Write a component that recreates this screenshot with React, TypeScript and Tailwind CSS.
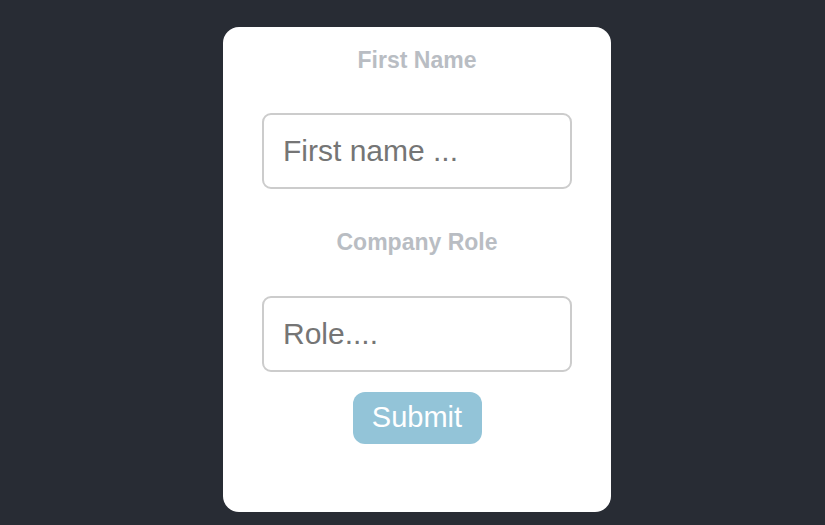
import { useState } from 'react'

export default function App() {
  const [name, setName] = useState('')
  const [role, setRole] = useState('')

  return (
    <div className="min-h-screen bg-[#282c34] flex justify-center pl-[9px] pt-[27px] font-['Liberation_Sans',Arial,sans-serif]">
      <form
        onSubmit={(e) => e.preventDefault()}
        className="w-[388px] h-[485px] bg-white rounded-[16px] flex flex-col items-center pt-[20px]"
      >
        <label className="text-[23px] leading-[26px] font-bold text-[#b9bdc3]">First Name</label>
        <input
          value={name}
          onChange={(e) => setName(e.target.value)}
          placeholder="First name ..."
          className="mt-[40px] w-[310px] h-[76px] border-2 border-[#cccccc] rounded-[9px] pl-[19px] text-[30px] text-[#555] placeholder:text-[#757575] outline-none"
        />
        <label className="mt-[40px] text-[23px] leading-[26px] font-bold text-[#b9bdc3]">Company Role</label>
        <input
          value={role}
          onChange={(e) => setRole(e.target.value)}
          placeholder="Role...."
          className="mt-[41px] w-[310px] h-[76px] border-2 border-[#cccccc] rounded-[9px] pl-[19px] text-[30px] text-[#555] placeholder:text-[#757575] outline-none"
        />
        <button
          type="submit"
          className="mt-[20px] w-[129px] h-[52px] rounded-[12px] bg-[#93c4d8] text-white text-[29px]"
        >
          Submit
        </button>
      </form>
    </div>
  )
}
